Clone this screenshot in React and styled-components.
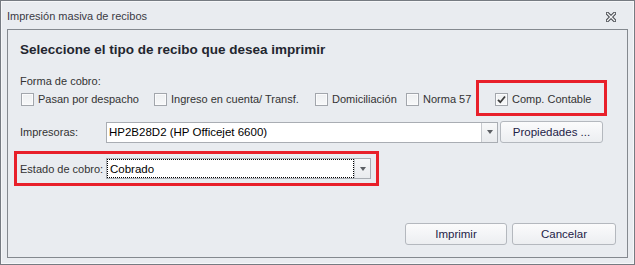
import styled, { createGlobalStyle } from 'styled-components';

const GlobalStyle = createGlobalStyle`
  html, body {
    margin: 0;
    padding: 0;
    background: #e9ecf0;
  }
  * {
    box-sizing: border-box;
  }
`;

const Window = styled.div`
  width: 635px;
  height: 265px;
  display: flex;
  flex-direction: column;
  background: #e9ecf0;
  border: 1px solid #767b82;
  box-shadow: inset 0 0 0 1px #f6f7f9;
  font-family: "Liberation Sans", Arial, sans-serif;
  font-size: 11px;
  color: #333;
`;

const TitleBar = styled.div`
  height: 28px;
  flex: none;
  display: flex;
  align-items: center;
  justify-content: space-between;
  padding: 2px 18px 0 6px;
  color: #3a3a44;
`;

const CloseButton = styled.div`
  width: 10px;
  height: 10px;
  display: flex;
  margin-top: 1px;
`;

const Panel = styled.div`
  flex: 1;
  margin: 0 6px 6px 6px;
  border: 1px solid #84898f;
  display: flex;
  flex-direction: column;
  padding: 12px 11px 12px 12px;
`;

const Heading = styled.div`
  font-size: 13.5px;
  line-height: 16px;
  font-weight: bold;
  color: #23262f;
`;

const Label = styled.div`
  line-height: 14px;
  margin-top: ${({ $top }) => $top || 0}px;
`;

const CheckRow = styled.div`
  display: grid;
  grid-template-columns: 133px 161px 91px 89px 96px;
  margin: 3px 0 0 1px;
  height: 16px;
  align-items: center;
`;

const CheckItem = styled.label`
  display: flex;
  align-items: center;
  gap: 4px;
  white-space: nowrap;
  position: relative;
`;

const Box = styled.span`
  width: 13px;
  height: 13px;
  flex: none;
  border: 1px solid #a2a6ac;
  background: linear-gradient(#eef0f2, #f7f8f9);
  box-shadow: inset 0 0 0 1px #fbfbfc;
  display: flex;
  align-items: center;
  justify-content: center;
`;

const Highlight = styled.div`
  position: relative;
  width: max-content;
  margin-top: ${({ $mt }) => $mt || 0}px;
  &::after {
    content: '';
    position: absolute;
    top: ${({ $t }) => $t}px;
    right: ${({ $r }) => $r}px;
    bottom: ${({ $b }) => $b}px;
    left: ${({ $l }) => $l}px;
    border: 3px solid #e8202a;
    pointer-events: none;
  }
`;

const FieldRow = styled.div`
  display: grid;
  grid-template-columns: 86px ${({ $combo }) => $combo}px auto;
  align-items: center;
  margin-top: ${({ $top }) => $top || 0}px;
`;

const Combo = styled.div`
  height: 21px;
  display: flex;
  background: #fff;
  border: 1px solid #a9adb3;
`;

const ComboText = styled.div`
  flex: 1;
  display: flex;
  align-items: center;
  padding-left: 2px;
  font-size: 11.5px;
  color: #000;
  ${({ $focus }) => $focus && `
    outline: 1px dotted #000;
    outline-offset: -1px;
    padding-left: 3px;
  `}
`;

const DropButton = styled.div`
  width: 16px;
  flex: none;
  border-left: 1px solid #c6c9ce;
  background: linear-gradient(#f7f8f9, #e9ebee);
  display: flex;
  align-items: center;
  justify-content: center;
  &::before {
    content: '';
    border-left: 3.5px solid transparent;
    border-right: 3.5px solid transparent;
    border-top: 4px solid #5c5f64;
  }
`;

const Button = styled.div`
  width: ${({ $w }) => $w}px;
  height: 22px;
  display: flex;
  align-items: center;
  justify-content: center;
  border: 1px solid #b4b8be;
  border-radius: 3px;
  background: linear-gradient(#fbfbfc, #eceef1);
  color: #1d2247;
  font-size: 11.5px;
  margin-left: ${({ $ml }) => $ml || 0}px;
`;

const Footer = styled.div`
  margin-top: auto;
  display: flex;
  justify-content: flex-end;
  gap: 5px;
`;

function Check({ children, checked }) {
  return (
    <CheckItem>
      <Box>
        {checked && (
          <svg width="9" height="9" viewBox="0 0 9 9">
            <path d="M1 4.8 L3.3 7.2 L8 1.5" fill="none" stroke="#3b3b3b" strokeWidth="1.8" />
          </svg>
        )}
      </Box>
      {children}
    </CheckItem>
  );
}

export default function App() {
  return (
    <>
      <GlobalStyle />
      <Window>
        <TitleBar>
          <span>Impresión masiva de recibos</span>
          <CloseButton>
            <svg width="10" height="10" viewBox="0 0 10 10">
              <path d="M1.5 1.5 L8.5 8.5 M8.5 1.5 L1.5 8.5" stroke="#4a4d52" strokeWidth="3.4" strokeLinecap="square" />
              <path d="M1.5 1.5 L8.5 8.5 M8.5 1.5 L1.5 8.5" stroke="#f4f5f7" strokeWidth="1.3" strokeLinecap="square" />
            </svg>
          </CloseButton>
        </TitleBar>
        <Panel>
          <Heading>Seleccione el tipo de recibo que desea imprimir</Heading>
          <Label $top={16}>Forma de cobro:</Label>
          <CheckRow>
            <Check>Pasan por despacho</Check>
            <Check>Ingreso en cuenta/ Transf.</Check>
            <Check>Domiciliación</Check>
            <Check>Norma 57</Check>
            <Highlight $t={-13} $r={-15} $b={-10} $l={-19}>
              <Check checked>Comp. Contable</Check>
            </Highlight>
          </CheckRow>
          <FieldRow $combo={392} $top={14}>
            <span>Impresoras:</span>
            <Combo>
              <ComboText>HP2B28D2 (HP Officejet 6600)</ComboText>
              <DropButton />
            </Combo>
            <Button $w={103} $ml={2}>Propiedades ...</Button>
          </FieldRow>
          <Highlight $mt={15} $t={-7} $r={-8} $b={-7} $l={-6}>
            <FieldRow $combo={265}>
              <span>Estado de cobro:</span>
              <Combo>
                <ComboText $focus>Cobrado</ComboText>
                <DropButton />
              </Combo>
            </FieldRow>
          </Highlight>
          <Footer>
            <Button $w={102}>Imprimir</Button>
            <Button $w={104}>Cancelar</Button>
          </Footer>
        </Panel>
      </Window>
    </>
  );
}
